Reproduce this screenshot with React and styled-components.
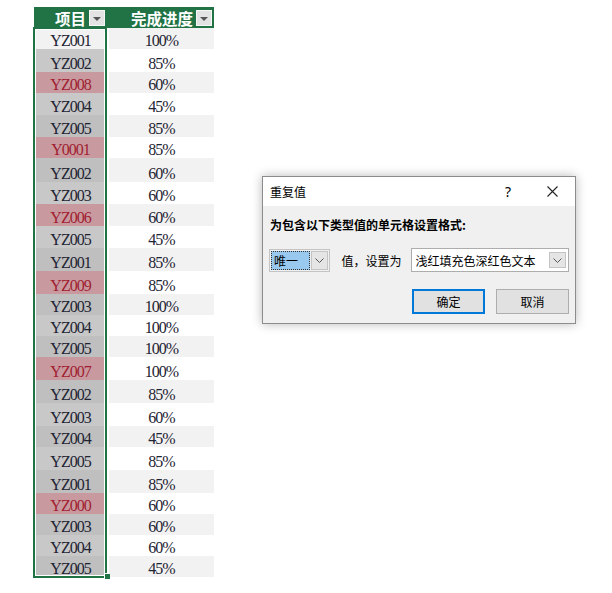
import React from "react";
import styled, { createGlobalStyle } from "styled-components";

const rows = [
  ["YZ001", "100%", false, 21],
  ["YZ002", "85%", false, 23],
  ["YZ008", "60%", true, 21],
  ["YZ004", "45%", false, 22],
  ["YZ005", "85%", false, 22],
  ["Y0001", "85%", true, 21],
  ["YZ002", "60%", false, 24],
  ["YZ003", "60%", false, 22],
  ["YZ006", "60%", true, 22],
  ["YZ005", "45%", false, 22],
  ["YZ001", "85%", false, 23],
  ["YZ009", "85%", true, 23],
  ["YZ003", "100%", false, 21],
  ["YZ004", "100%", false, 21],
  ["YZ005", "100%", false, 21],
  ["YZ007", "100%", true, 23],
  ["YZ002", "85%", false, 23],
  ["YZ003", "60%", false, 23],
  ["YZ004", "45%", false, 21],
  ["YZ005", "85%", false, 23],
  ["YZ001", "85%", false, 23],
  ["YZ000", "60%", true, 21],
  ["YZ003", "60%", false, 21],
  ["YZ004", "60%", false, 21],
  ["YZ005", "45%", false, 21],
];

const GlobalStyle = createGlobalStyle`
  body {
    margin: 0;
    background: #fff;
  }
`;

const Chevron = () => (
  <svg width="9" height="5" viewBox="0 0 9 5">
    <polyline points="0.5,0.5 4.5,4.5 8.5,0.5" fill="none" stroke="#555" strokeWidth="1" />
  </svg>
);

const App = () => {
  return (
    <Page>
      <GlobalStyle />
      <Sheet>
        <HeaderRow>
          <HeadCell>
            项目 <FilterBtn />
          </HeadCell>
          <HeadCell>
            完成进度 <FilterBtn />
          </HeadCell>
        </HeaderRow>
        {rows.map(([id, pct, dup, h], i) => (
          <Row key={i} $h={h}>
            <IdCell $band={i % 2 === 0} $dup={dup} $active={i === 0}>
              {id}
            </IdCell>
            <PctCell $band={i % 2 === 0}>{pct}</PctCell>
          </Row>
        ))}
        <Selection>
          <Handle />
        </Selection>
      </Sheet>

      <Dialog>
        <TitleBar>
          <span className="title">重复值</span>
          <span className="help">?</span>
          <span className="close">
            <svg width="11" height="11" viewBox="0 0 11 11">
              <path d="M0.5 0.5 L10.5 10.5 M10.5 0.5 L0.5 10.5" stroke="#222" strokeWidth="1.1" />
            </svg>
          </span>
        </TitleBar>
        <Body>
          <Prompt>为包含以下类型值的单元格设置格式:</Prompt>
          <Controls>
            <SmallSelect>
              <span className="value">唯一</span>
              <ArrowBtn>
                <Chevron />
              </ArrowBtn>
            </SmallSelect>
            <Label>值，设置为</Label>
            <WideSelect>
              <span>浅红填充色深红色文本</span>
              <ArrowBtn $inset>
                <Chevron />
              </ArrowBtn>
            </WideSelect>
          </Controls>
          <Buttons>
            <Button $primary>确定</Button>
            <Button>取消</Button>
          </Buttons>
        </Body>
      </Dialog>
    </Page>
  );
};

const Page = styled.div`
  display: flex;
  align-items: flex-start;
  padding: 7px 0 0 34px;
  width: 612px;
  height: 593px;
  box-sizing: border-box;
`;

const Sheet = styled.div`
  position: relative;
  width: 180px;
  font-family: "Liberation Serif", "Times New Roman", serif;
`;

const HeaderRow = styled.div`
  display: grid;
  grid-template-columns: 73px 107px;
  height: 21px;
  background: #217346;
`;

const HeadCell = styled.div`
  display: flex;
  align-items: center;
  justify-content: flex-end;
  gap: 3px;
  padding-right: 2px;
  color: #fff;
  font-family: "Noto Sans CJK SC", sans-serif;
  font-weight: 700;
  font-size: 15.5px;
`;

const FilterBtn = styled.span`
  position: relative;
  width: 14px;
  height: 14px;
  background: #e3e3e3;
  border: 1px solid #f6f6f6;
  &::after {
    content: "";
    position: absolute;
    left: 3px;
    top: 6px;
    border-left: 4px solid transparent;
    border-right: 4px solid transparent;
    border-top: 4px solid #555;
  }
`;

const Row = styled.div`
  display: grid;
  grid-template-columns: 73px 107px;
  height: ${(p) => p.$h}px;
`;

const Cell = styled.div`
  display: flex;
  align-items: flex-end;
  justify-content: center;
  font-size: 16px;
  line-height: 16px;
  letter-spacing: -1px;
`;

const IdCell = styled(Cell)`
  background: ${(p) =>
    p.$active ? "#f2f2f2" : p.$dup ? "#c89aa0" : p.$band ? "#bfbfbf" : "#c8c8c8"};
  color: ${(p) => (p.$dup ? "#a01e30" : "#1e2433")};
`;

const PctCell = styled(Cell)`
  background: ${(p) => (p.$band ? "#f2f2f2" : "#fff")};
  border-left: 2px solid #fff;
  color: #1e2433;
`;

const Selection = styled.div`
  position: absolute;
  left: -1px;
  top: 20px;
  width: 74px;
  height: 551px;
  box-sizing: border-box;
  border: 2px solid #217346;
  box-shadow: inset 0 0 0 1px #fff;
  pointer-events: none;
`;

const Handle = styled.div`
  position: absolute;
  right: -5px;
  bottom: -3px;
  width: 5px;
  height: 5px;
  background: #217346;
  box-shadow: -1px -1px 0 0 #fff;
`;

const Dialog = styled.div`
  margin: 169px 0 0 48px;
  width: 314px;
  box-sizing: border-box;
  border: 1px solid #8c8c8c;
  background: #f0f0f0;
  box-shadow: 0 0 10px rgba(0, 0, 0, 0.28);
  font-family: "Noto Sans CJK SC", sans-serif;
  font-size: 12px;
  color: #000;
`;

const TitleBar = styled.div`
  display: flex;
  align-items: center;
  height: 29px;
  background: #fff;
  padding-left: 7px;
  .title {
    flex: 1;
  }
  .help {
    width: 30px;
    text-align: center;
    font-family: "Noto Sans", sans-serif;
    font-size: 14px;
    margin-right: 6px;
  }
  .close {
    width: 46px;
    display: flex;
    justify-content: center;
  }
`;

const Body = styled.div`
  padding: 10px 6px 9px 6px;
`;

const Prompt = styled.div`
  font-weight: 700;
  padding-left: 1px;
  line-height: 18px;
`;

const Controls = styled.div`
  display: flex;
  align-items: center;
  margin-top: 14px;
`;

const SmallSelect = styled.div`
  display: flex;
  align-items: center;
  width: 62px;
  height: 23px;
  box-sizing: border-box;
  border: 1px solid #c4c4c4;
  padding: 1px;
  gap: 1px;
  .value {
    flex: 1;
    align-self: stretch;
    display: flex;
    align-items: center;
    padding-left: 3px;
    background: #99c9ef;
    outline: 1px dotted #333;
    outline-offset: -1px;
  }
`;

const ArrowBtn = styled.div`
  display: flex;
  align-items: center;
  justify-content: center;
  width: 17px;
  height: ${(p) => (p.$inset ? "16px" : "19px")};
  box-sizing: border-box;
  background: #e5e5e5;
  border: 1px solid #c4c4c4;
  margin-right: ${(p) => (p.$inset ? "2px" : "0")};
`;

const Label = styled.span`
  margin: 0 10px 0 11px;
  width: 60px;
  white-space: nowrap;
`;

const WideSelect = styled.div`
  display: flex;
  align-items: center;
  justify-content: space-between;
  width: 159px;
  height: 24px;
  box-sizing: border-box;
  border: 1px solid #adadad;
  background: #fff;
  padding-left: 3px;
`;

const Buttons = styled.div`
  display: flex;
  justify-content: flex-end;
  gap: 11px;
  margin-top: 17px;
`;

const Button = styled.div`
  display: flex;
  align-items: center;
  justify-content: center;
  width: 73px;
  height: 25px;
  box-sizing: border-box;
  background: #e1e1e1;
  border: ${(p) => (p.$primary ? "2px solid #0078d7" : "1px solid #adadad")};
`;

export default App;
